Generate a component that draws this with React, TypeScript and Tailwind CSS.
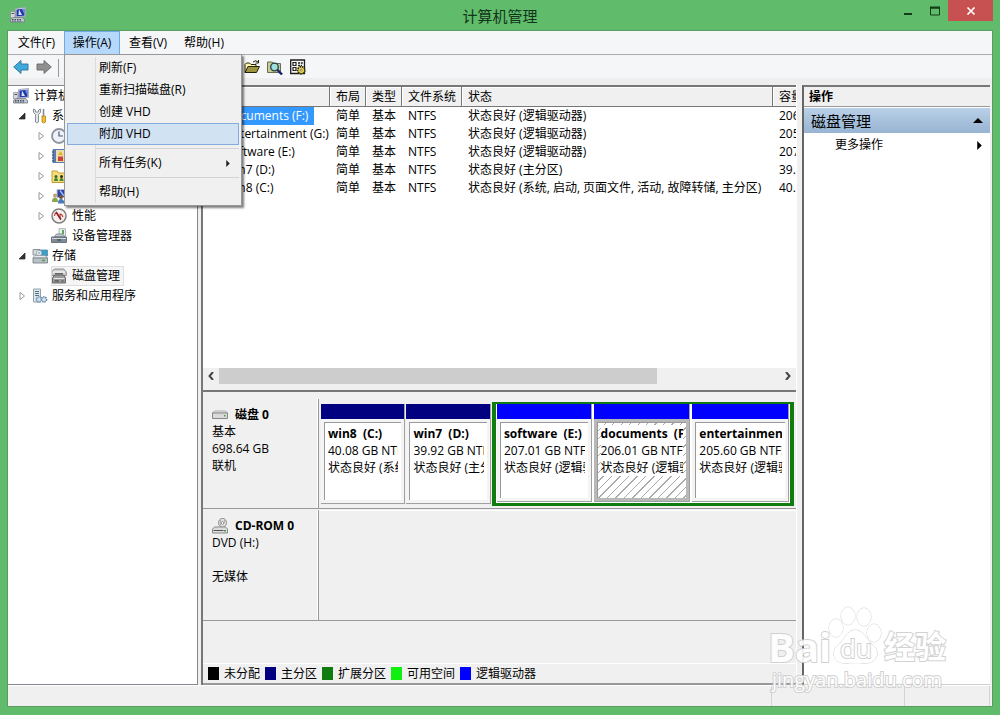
import React, { useState } from 'react';
import clsx from 'clsx';

type IconName =
  | 'computer' | 'tools' | 'clock' | 'events' | 'shared' | 'users' | 'performance'
  | 'device' | 'storage' | 'disk' | 'services' | 'drive' | 'cdrom';

const Svg: React.FC<{ children: React.ReactNode; className?: string }> = ({ children, className }) => (
  <svg viewBox="0 0 16 16" className={clsx('h-4 w-4 shrink-0', className)} fill="none" aria-hidden="true">
    {children}
  </svg>
);

const icons: Record<IconName, React.ReactNode> = {
  computer: (
    <>
      <path d="M5.500 1.500 15.500 .5v9l-10 .5z" fill="#d5daea" stroke="#9aa0b8" strokeWidth=".8" />
      <path d="M6.500 2.500l8-.8v7l-8 .6z" fill="#2439a8" />
      <path d="M9 2.500l3 5.500H8.500z" fill="#dbe6ff" />
      <path d="M12 2l2.500-.3v6z" fill="#6f8fdf" />
      <path d="M.5 4.500h4.500V11H.5z" fill="#d8d8dc" stroke="#8a8a92" strokeWidth=".7" />
      <path d="M1.500 6.500h2.500" stroke="#4d4d55" />
      <path d="M.5 12.500 3 10.500h9.500l2 2v2.500H.5z" fill="#bfc3ca" stroke="#747b88" strokeWidth=".8" />
      <path d="M2 12.500h10M2 14h10" stroke="#444e62" strokeDasharray="1.500 1" />
    </>
  ),
  tools: (
    <>
      <path d="M1.500 1v3.500l2 2V14q1.500 2 3 0V6.500l2-2V1L6.500 2v2h-3V2z" fill="#e2e5e8" stroke="#7d868e" strokeWidth=".9" />
      <path d="M11.500 1v7" stroke="#848d94" strokeWidth="1.600" />
      <path d="M10 8h3.500v6q-1.700 2-3.500 0z" fill="#f1c22c" stroke="#a98314" strokeWidth=".8" />
    </>
  ),
  clock: (
    <>
      <circle cx="8" cy="8" r="7" fill="#eef2f8" stroke="#8f949c" strokeWidth="1.800" />
      <path d="M8 3.500V8h4" stroke="#4f5d78" strokeWidth="1.200" />
    </>
  ),
  events: (
    <>
      <path d="M2 1.500h12v13H2z" fill="#e9ddb0" stroke="#5f78a8" />
      <path d="M2 2h3v12H2z" fill="#587bb8" />
      <path d="M7 8.500h5v4.500H7z" fill="#cf4033" />
      <path d="m9.500 3 2.500 4H7z" fill="#e8b11c" />
      <path d="M1 4h2M1 7h2M1 10h2M1 13h2" stroke="#35466b" />
    </>
  ),
  shared: (
    <>
      <path d="M1 3h5l1.500 2H15v9.500H1z" fill="#f6dc7b" stroke="#c59c2f" />
      <circle cx="5" cy="8.500" r="1.500" fill="#2f6a2b" />
      <path d="M3 13q0-3 2-3t2 3z" fill="#3f8a3a" />
      <circle cx="10.500" cy="8.500" r="1.500" fill="#2c2c2c" />
      <path d="M8.500 13q0-3 2-3t2 3z" fill="#3f8a3a" />
    </>
  ),
  users: (
    <>
      <path d="M6 1.500h9v8H6z" fill="#2a44a8" stroke="#b9bfd2" />
      <path d="M9 2.500 13 8" stroke="#9cb8ee" strokeWidth="1.500" />
      <circle cx="4" cy="7.500" r="2" fill="#c3a070" />
      <path d="M1 14q0-4.500 3-4.500T7 14z" fill="#88a64a" />
      <circle cx="10" cy="9" r="2" fill="#775534" />
      <path d="M7 15.500q0-4.500 3-4.500t3.500 4.500z" fill="#4878b5" />
    </>
  ),
  performance: (
    <>
      <circle cx="8" cy="8" r="7" fill="#f6f1f0" stroke="#817c7c" strokeWidth="1.500" />
      <path d="M3.500 8q0-2.500 2-3.500l3.500 6V6q2 0 3 3" stroke="#c22f2c" strokeWidth="1.100" />
      <path d="m5 4 5 7.500" stroke="#8c2020" strokeWidth="1.500" />
    </>
  ),
  device: (
    <>
      <path d="M8 .7h6.500v7.500H8z" fill="#eef1ee" stroke="#9aa29f" strokeWidth=".8" />
      <path d="M11 2h2v4h-2z" fill="#57ad55" />
      <path d="M3 9 5.500 6h6L14 9z" fill="#c2c9d1" stroke="#737c86" strokeWidth=".8" />
      <path d="M.5 9h15v5.500H.5z" fill="#7f8a94" stroke="#56616b" strokeWidth=".8" />
      <path d="M1 10.500h14" stroke="#d5dbe0" />
      <path d="M6 12h4" stroke="#2e3840" />
    </>
  ),
  storage: (
    <>
      <path d="M1 1.500h7v5.500H1z" fill="#d3d8dc" stroke="#7b8388" strokeWidth=".8" />
      <path d="M6.500 2h9v6h-9z" fill="#3ba0c9" stroke="#5d8ea3" strokeWidth=".8" />
      <circle cx="7" cy="5" r="2.800" fill="#e4eef2" stroke="#7b8f98" strokeWidth=".6" />
      <circle cx="7" cy="5" r=".8" fill="#6b7a80" />
      <path d="m1 10 2-2.500h10l2.500 2.500z" fill="#e9ecee" stroke="#8c9398" strokeWidth=".7" />
      <path d="M1 10h14.500v5H1z" fill="#b9c1c6" stroke="#70797f" strokeWidth=".8" />
      <path d="M10 12.500h3" stroke="#45a444" strokeWidth="1.500" />
    </>
  ),
  disk: (
    <>
      <path d="m.7 4 2.500-3h9.500l2.600 3v3.500H.7z" fill="#cfcfcf" stroke="#777" strokeWidth=".8" />
      <path d="M2 4h12" stroke="#fff" />
      <path d="m1.500 10 2-3h9l2 3v5h-13z" fill="#9c9c9c" stroke="#5d5d5d" strokeWidth=".9" />
      <path d="M2.500 10.500h11" stroke="#e5e5e5" />
      <path d="M3.500 13h4.500M10.500 13h2M4 5.800h8" stroke="#3d3d3d" />
    </>
  ),
  services: (
    <>
      <path d="M1.500 1h7v13h-7z" fill="#dfe6ea" stroke="#8997a2" strokeWidth=".9" />
      <path d="M3 3.500h4M3 5.500h4M3 7.500h4" stroke="#55728b" />
      <circle cx="7" cy="11.500" r="2.600" fill="#d0e1ee" stroke="#6c93b2" strokeWidth="1.500" strokeDasharray="1.500 .7" />
      <circle cx="12" cy="11.500" r="2.600" fill="#d0e1ee" stroke="#6987a0" strokeWidth="1.500" strokeDasharray="1.500 .7" />
    </>
  ),
  drive: (
    <>
      <path d="m.5 6 2-2h11l2 2z" fill="#f3f3f3" stroke="#9a9a9a" strokeWidth=".8" />
      <path d="M.5 6h15v5.500H.5z" fill="#dadada" stroke="#7d7d7d" strokeWidth=".9" />
      <path d="M12 8h1.500v1.500H12z" fill="#3c9e49" />
    </>
  ),
  cdrom: (
    <>
      <ellipse cx="10.500" cy="4.800" rx="4" ry="4.500" fill="#e0e0e0" stroke="#858585" strokeWidth=".9" />
      <ellipse cx="10.500" cy="5" rx="1.200" ry="1.500" fill="#fff" stroke="#777" strokeWidth=".7" />
      <path d="M8.500 2v5M12.500 2v3" stroke="#999" strokeWidth=".7" />
      <path d="m.5 11 2-2h11l2 2v4H.5z" fill="#dcdcdc" stroke="#808080" strokeWidth=".9" />
      <path d="M1.500 12.500h10" stroke="#555" />
      <path d="M12 12h2v1.500h-2z" fill="#3c9e49" />
    </>
  ),
};

const Icon: React.FC<{ name: IconName }> = ({ name }) => <Svg>{icons[name]}</Svg>;

const Arrow: React.FC<{ back?: boolean }> = ({ back }) => (
  <Svg>
    {back ? (
      <path d="M.7 8 8 1.500V5h7v6H8v3.500z" fill="#40a9dc" stroke="#2f7199" strokeWidth=".9" />
    ) : (
      <path d="M15.300 8 8 1.500V5H1v6h7v3.500z" fill="#8f8f8f" stroke="#6c6c6c" strokeWidth=".9" />
    )}
  </Svg>
);

interface TreeNode {
  label: string;
  icon: IconName;
  level: 0 | 1 | 2;
  state?: 'open' | 'closed';
  selected?: boolean;
}

const tree: TreeNode[] = [
  { label: '计算机管理(本地)', icon: 'computer', level: 0 },
  { label: '系统工具', icon: 'tools', level: 1, state: 'open' },
  { label: '任务计划程序', icon: 'clock', level: 2, state: 'closed' },
  { label: '事件查看器', icon: 'events', level: 2, state: 'closed' },
  { label: '共享文件夹', icon: 'shared', level: 2, state: 'closed' },
  { label: '本地用户和组', icon: 'users', level: 2, state: 'closed' },
  { label: '性能', icon: 'performance', level: 2, state: 'closed' },
  { label: '设备管理器', icon: 'device', level: 2 },
  { label: '存储', icon: 'storage', level: 1, state: 'open' },
  { label: '磁盘管理', icon: 'disk', level: 2, selected: true },
  { label: '服务和应用程序', icon: 'services', level: 1, state: 'closed' },
];

const indent = ['pl-[5px]', 'pl-2', 'pl-[27px]'];

const volumes = [
  { name: 'documents (F:)', status: '状态良好 (逻辑驱动器)', size: '206.01 GB' },
  { name: 'entertainment (G:)', status: '状态良好 (逻辑驱动器)', size: '205.60 GB' },
  { name: 'software (E:)', status: '状态良好 (逻辑驱动器)', size: '207.01 GB' },
  { name: 'win7 (D:)', status: '状态良好 (主分区)', size: '39.92 GB' },
  { name: 'win8 (C:)', status: '状态良好 (系统, 启动, 页面文件, 活动, 故障转储, 主分区)', size: '40.08 GB' },
];

const columns = [
  { label: '卷', width: 'w-[127px]' },
  { label: '布局', width: 'w-9' },
  { label: '类型', width: 'w-9' },
  { label: '文件系统', width: 'w-[60px]' },
  { label: '状态', width: 'w-[311px]' },
  { label: '容量', width: 'w-20' },
];

const legend = [
  { label: '未分配', color: 'bg-black' },
  { label: '主分区', color: 'bg-[#000080]' },
  { label: '扩展分区', color: 'bg-[#107c10]' },
  { label: '可用空间', color: 'bg-[#10f010]' },
  { label: '逻辑驱动器', color: 'bg-[#0000ff]' },
];

// null is a separator line
const actionMenu: (string | null)[] = ['刷新(F)', '重新扫描磁盘(R)', '创建 VHD', '附加 VHD', null, '所有任务(K)', null, '帮助(H)'];

const TitleBar = () => (
  <header className="relative flex h-[30px] items-start justify-between">
    <div className="pt-[7px] pl-[3px]"><Icon name="computer" /></div>
    <h1 className="pointer-events-none absolute inset-x-0 top-1 text-center text-[15px] leading-6 text-[#12351a]">计算机管理</h1>
    <div className="flex h-[21px]">
      <button aria-label="最小化" className="flex w-7 items-center justify-center">
        <svg viewBox="0 0 12 12" className="h-3 w-3"><path d="M2 8h8v2H2z" fill="#123d18" /></svg>
      </button>
      <button aria-label="最大化" className="flex w-[26px] items-center justify-center">
        <svg viewBox="0 0 12 12" className="h-3 w-3" fill="none"><path d="M1.500 3h9v7h-9z" stroke="#123d18" /><path d="M1 2.500h10" stroke="#123d18" strokeWidth="2" /></svg>
      </button>
      <button aria-label="关闭" className="flex w-[45px] items-center justify-center bg-[#c75050]">
        <svg viewBox="0 0 10 10" className="h-[10px] w-[10px]"><path d="m1.500 1.500 7 7m0-7-7 7" stroke="#fff" strokeWidth="1.700" /></svg>
      </button>
    </div>
  </header>
);

const ActionMenu = () => (
  <div role="menu" className="absolute top-full left-0 z-20 w-[178px] border border-[#979797] bg-[#f0f0f0] p-[2px] shadow-[2px_2px_2px_rgba(0,0,0,0.5)]">
    <div className="absolute top-[2px] bottom-[2px] left-[30px] w-px bg-[#dcdcdc]" />
    {actionMenu.map((label, i) =>
      label === null ? (
        <div key={i} className="ml-7 flex h-[7px] items-center"><div className="h-px w-full bg-[#d4d4d4]" /></div>
      ) : (
        <button
          key={i}
          role="menuitem"
          className={clsx(
            'relative flex h-[22px] w-full items-center justify-between border pr-2 pl-[31px]',
            label === '附加 VHD' ? 'border-[#84acdd] bg-[#d1e2f2]' : 'border-transparent'
          )}
        >
          {label}
          {label === '所有任务(K)' && <svg viewBox="0 0 4 8" className="h-[7px] w-1"><path d="M0 0 4 4 0 8z" fill="#222" /></svg>}
        </button>
      )
    )}
  </div>
);

const MenuBar = () => {
  const [open, setOpen] = useState(true);
  return (
    <nav className="flex h-6 border-b border-[#a9adb0] bg-[#f5f6f7] pl-px">
      <button className="w-[55px]">文件(F)</button>
      <div className="relative">
        <button onClick={() => setOpen(!open)} className="h-6 w-14 border border-[#6cabe8] bg-[#b5d8fb]">操作(A)</button>
        {open && <ActionMenu />}
      </div>
      <button className="w-14">查看(V)</button>
      <button className="w-14">帮助(H)</button>
    </nav>
  );
};

const Toolbar = () => (
  <div className="flex h-[30px] items-start border-b-[7px] border-[#eeeeee] bg-[#f5f6f7] pt-1 pl-[5px]">
    <button aria-label="后退"><Arrow back /></button>
    <button aria-label="前进" className="ml-[7px]"><Arrow /></button>
    <div className="ml-[6px] h-[18px] w-px bg-[#999]" />
    <div className="ml-[185px] flex gap-[7px]">
      <button aria-label="打开">
        <Svg>
          <path d="M1 13.500V5.500L2.500 4h3L7 5.500h5v2" fill="#fff4a8" stroke="#26230b" />
          <path d="m1 13.500 3-6h11.500l-3 6z" fill="#9d9440" stroke="#26230b" />
          <path d="M9 3q3-2.500 5 0m.5-2v3h-3" stroke="#26230b" />
        </Svg>
      </button>
      <button aria-label="查找">
        <Svg>
          <path d="M.5 3h5l1 1.500h7v9H.5z" fill="#c9cc92" stroke="#6a6d52" />
          <circle cx="7.500" cy="8" r="3.800" fill="#9de0db" stroke="#253d42" strokeWidth="1.300" />
          <path d="m10.500 11 4.500 4.500" stroke="#14206f" strokeWidth="2.400" />
        </Svg>
      </button>
      <button aria-label="设置">
        <Svg>
          <path d="M.7 1h13.800v13.500H.7z" fill="#f8f8f4" stroke="#1d1d1d" strokeWidth="1.300" />
          <path d="M3 3.500h3v3H3zM3 8.500h3v3H3z" stroke="#222" strokeWidth="1.200" />
          <path d="M8 4h5M8 6.500h4" stroke="#222" strokeWidth="1.300" strokeDasharray="2 .8" />
          <circle cx="11.200" cy="11.200" r="3.500" fill="#e5d04a" stroke="#292406" strokeWidth="1.700" strokeDasharray="1.600 .8" />
          <circle cx="11.200" cy="11.200" r="2.500" fill="#ecd951" />
          <circle cx="11.200" cy="11.200" r="1" fill="#fff" stroke="#292406" strokeWidth=".5" />
        </Svg>
      </button>
    </div>
  </div>
);

const Expander: React.FC<{ state?: 'open' | 'closed' }> = ({ state }) => (
  <svg viewBox="0 0 10 10" className="mx-px h-[10px] w-[10px] shrink-0" fill="none">
    {state === 'open' && <path d="M8 2v6H2z" fill="#333" stroke="#222" strokeWidth=".7" />}
    {state === 'closed' && <path d="M3 1.500v7L7.500 5z" fill="#fff" stroke="#999" />}
  </svg>
);

const Tree = () => (
  <aside className="w-[190px] shrink-0 overflow-hidden border border-l-0 border-[#828790] bg-white">
    <ul>
      {tree.map(node => (
        <li key={node.label} className={clsx('flex h-5 items-center', indent[node.level])}>
          {node.level > 0 && <span className="mr-1 flex"><Expander state={node.state} /></span>}
          <button
            className={clsx(
              'flex h-5 items-center pr-1 whitespace-nowrap',
              node.level === 1 ? 'gap-1' : 'gap-[5px]',
              node.selected && 'bg-[#f5f5f5] outline-1 -outline-offset-1 outline-[#dedede]'
            )}
          >
            <Icon name={node.icon} />
            {node.label}
          </button>
        </li>
      ))}
    </ul>
  </aside>
);

const VolumeList = () => (
  <section className="flex h-[307px] flex-col border-t-2 border-b-2 border-[#777]">
    <div className="min-h-0 flex-1 overflow-hidden bg-white">
      <table className="w-[650px] table-fixed border-separate border-spacing-0 text-left">
        <thead>
          <tr className="h-5 bg-[#f0f0f0]">
            {columns.map(c => (
              <th key={c.label} className={clsx(c.width, 'border-r border-b border-[#777] p-0 pl-[6px] font-normal whitespace-nowrap shadow-[inset_1px_1px_0_#fff]')}>{c.label}</th>
            ))}
          </tr>
        </thead>
        <tbody>
          {volumes.map((v, i) => (
            <tr key={v.name} className="h-[18px] whitespace-nowrap">
              <td className="p-0">
                <div className="flex items-center pl-[6px]">
                  <Icon name="drive" />
                  <span className={clsx('pr-[6px] pl-px leading-[18px]', i === 0 && 'bg-[#3399ff] text-white')}>{v.name}</span>
                </div>
              </td>
              <td className="p-0 pl-[6px]">简单</td>
              <td className="p-0 pl-[6px]">基本</td>
              <td className="p-0 pl-[6px]">NTFS</td>
              <td className="p-0 pl-[6px]">{v.status}</td>
              <td className="p-0 pl-[6px]">{v.size}</td>
            </tr>
          ))}
        </tbody>
      </table>
    </div>
    <div className="mb-[6px] flex h-4 bg-[#f0f0f0]">
      <button aria-label="向左滚动" className="flex w-4 items-center justify-center">
        <svg viewBox="0 0 8 8" className="h-2 w-2" fill="none"><path d="M6 0 2.500 4 6 8" stroke="#444" strokeWidth="2" /></svg>
      </button>
      <div className="flex-1"><div className="h-full w-[78%] bg-[#cdcdcd]" /></div>
      <button aria-label="向右滚动" className="flex w-4 items-center justify-center">
        <svg viewBox="0 0 8 8" className="h-2 w-2" fill="none"><path d="M2 0l3.500 4L2 8" stroke="#444" strokeWidth="2" /></svg>
      </button>
    </div>
  </section>
);

interface PartitionProps {
  name: string;
  size: string;
  status: string;
  logical?: boolean;
  selected?: boolean;
}

const Partition: React.FC<PartitionProps> = ({ name, size, status, logical, selected }) => (
  <button className="flex min-w-0 flex-col border-r border-b border-[#a0a0a0] text-left">
    <div className={clsx('h-[15px] w-full shrink-0', logical ? 'bg-[#0000ff]' : 'bg-[#000080]')} />
    <div className={clsx('min-h-0 w-full flex-1 p-[3px]', selected ? 'bg-[#b8b8b8]' : 'bg-[#f4f4f4]')}>
      <div
        className={clsx(
          'h-full overflow-hidden border-t border-l border-[#999] bg-white px-[3px] pt-[2px]',
          selected && 'bg-[repeating-linear-gradient(135deg,#fff_0px,#fff_5px,#aaa_5px,#aaa_6px)]'
        )}
      >
        <div className="overflow-hidden leading-[17px] whitespace-pre">
          <div className={clsx(selected && 'bg-white')}><b>{name}</b></div>
          <div className={clsx(selected && 'bg-white')}>{size} NTFS</div>
          <div className={clsx(selected && 'bg-white')}>{status}</div>
        </div>
      </div>
    </div>
  </button>
);

const DiskLabel: React.FC<{ icon: IconName; title: string; lines: string[] }> = ({ icon, title, lines }) => (
  <div className="w-[116px] shrink-0 border-r border-b border-[#999] pt-[7px] pl-[9px] leading-[17px] shadow-[inset_-1px_0_0_#fff]">
    <h2 className="flex items-center gap-[7px] font-bold"><Icon name={icon} />{title}</h2>
    {lines.map((line, i) => <p key={i} className="h-[17px]">{line}</p>)}
  </div>
);

const DiskMap = () => (
  <section className="flex flex-1 flex-col border-b-2 border-[#999] pt-[7px]">
    <div className="flex h-[110px]">
      <DiskLabel icon="drive" title="磁盘 0" lines={['基本', '698.64 GB', '联机']} />
      <div className="grid min-w-0 flex-1 grid-cols-[86fr_86fr_304fr] border-b border-[#999] pt-1 pr-[2px] pb-1 pl-[2px]">
        <div className="grid min-w-0 pt-px pr-px"><Partition name="win8  (C:)" size="40.08 GB" status="状态良好 (系统, 启动)" /></div>
        <div className="grid min-w-0 pt-px pr-px"><Partition name="win7  (D:)" size="39.92 GB" status="状态良好 (主分区)" /></div>
        <div className="-mt-px -mb-[2px] grid min-w-0 grid-cols-[96fr_98fr_98fr] gap-[2px] border-t-2 border-r-4 border-b-[3px] border-l-4 border-[#107c10] bg-white px-px pb-px">
          <Partition logical name="software  (E:)" size="207.01 GB" status="状态良好 (逻辑驱动器)" />
          <Partition logical selected name="documents  (F:)" size="206.01 GB" status="状态良好 (逻辑驱动器)" />
          <Partition logical name="entertainment  (G:)" size="205.60 GB" status="状态良好 (逻辑驱动器)" />
        </div>
      </div>
    </div>
    <div className="flex h-28 pt-px">
      <DiskLabel icon="cdrom" title="CD-ROM 0" lines={['DVD (H:)', '', '无媒体']} />
      <div className="flex-1 border-t border-b border-t-white border-b-[#999]" />
    </div>
    <footer className="mt-auto flex h-5 items-center gap-[5px] border-t border-white pl-[5px]">
      {legend.map(l => (
        <span key={l.label} className="flex items-center gap-[5px]">
          <span className={clsx('h-[13px] w-[11px]', l.color)} />
          {l.label}
        </span>
      ))}
    </footer>
  </section>
);

const ActionsPane = () => (
  <aside className="mr-[2px] w-[188px] shrink-0 border-t-2 border-b border-l-2 border-t-[#777] border-b-[#ccc] border-l-[#666] bg-white">
    <h2 className="flex h-5 items-center border-b border-[#999] bg-[#f0f0f0] pl-[5px] font-bold">操作</h2>
    <button className="mt-px flex h-[25px] w-full items-center justify-between bg-linear-to-b from-[#b9d0e8] to-[#98b4d2] pr-[7px] pl-[7px] text-[15px]">
      磁盘管理
      <svg viewBox="0 0 10 5" className="h-[5px] w-[10px]"><path d="M0 5 5 0l5 5z" /></svg>
    </button>
    <button className="flex h-6 w-full items-center justify-between pr-2 pl-[31px]">
      更多操作
      <svg viewBox="0 0 5 10" className="h-[9px] w-[5px]"><path d="M0 0 5 5 0 10z" /></svg>
    </button>
  </aside>
);

const Watermark = () => (
  <div className="pointer-events-none absolute right-[54px] bottom-[23px] z-30 w-[178px] font-bold text-white opacity-90 [paint-order:stroke] [-webkit-text-stroke:2px_#cdcdcd]">
    <div className="relative flex h-[62px] items-end justify-between leading-none">
      <span className="text-[40px] leading-[42px]">Bai</span>
      <svg viewBox="0 0 54 58" className="absolute bottom-1 left-[60px] h-[58px] w-[54px]" fill="#fff" stroke="#cdcdcd">
        <ellipse cx="8" cy="22" rx="7" ry="9" />
        <ellipse cx="20" cy="10" rx="7" ry="9" />
        <ellipse cx="36" cy="11" rx="7" ry="9" />
        <ellipse cx="46" cy="27" rx="7" ry="9" />
        <path d="M27 24c-9 0-10 10-17 15-7 6-5 17 5 18 7 1 17 1 24 0 11-1 13-12 6-18-7-5-9-15-18-15z" />
      </svg>
      <span className="absolute bottom-2 left-[72px] text-[26px] leading-6 font-normal">du</span>
      <span className="text-[31px] leading-[44px]">经验</span>
    </div>
    <div className="text-center text-[20px] leading-6 font-normal">jingyan.baidu.com</div>
  </div>
);

const App: React.FC = () => (
  <div className="relative flex min-h-screen flex-col overflow-hidden bg-[#60bb6a] px-[7px] pb-2 text-xs text-black font-['Open_Sans','Noto_Sans_CJK_SC',sans-serif]">
    <TitleBar />
    <main className="flex flex-1 flex-col border border-[#5a9c62] bg-[#f0f0f0]">
      <MenuBar />
      <Toolbar />
      <div className="flex flex-1">
        <Tree />
        <div className="ml-[3px] flex min-w-0 flex-1 flex-col border-l-2 border-[#777]">
          <VolumeList />
          <DiskMap />
        </div>
        <div className="w-[6px] shrink-0 border-l border-white" />
        <ActionsPane />
      </div>
      <footer className="flex h-[21px] justify-end border-t border-white pr-[2px]">
        <div className="w-[133px] border-l border-[#d4d4d4]" />
        <div className="w-[86px] border-x border-[#d4d4d4]" />
      </footer>
    </main>
    <Watermark />
  </div>
);

export default App;
